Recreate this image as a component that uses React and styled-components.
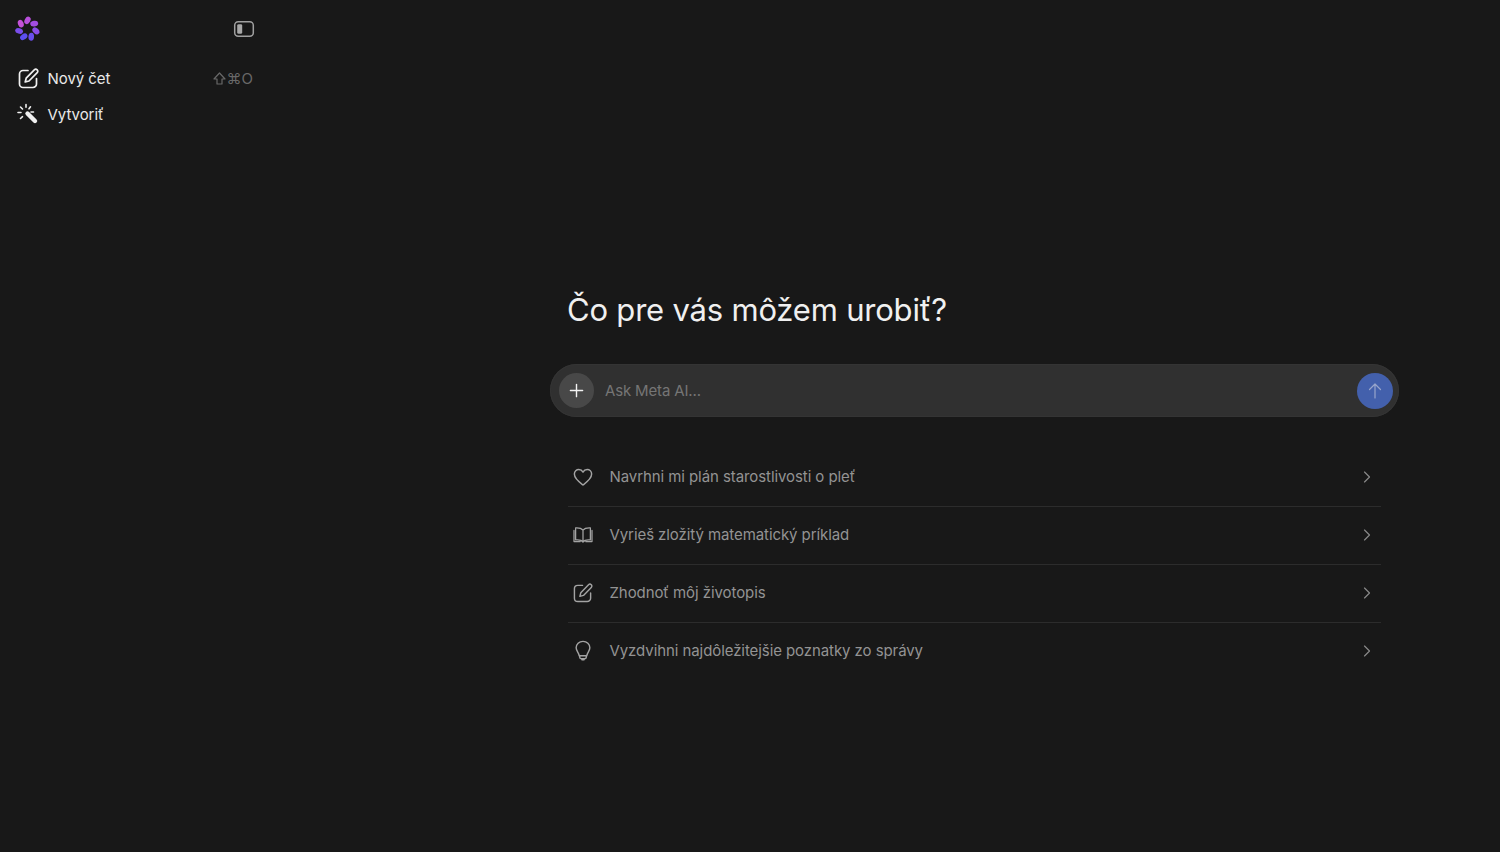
import React from "react";
import styled, { createGlobalStyle } from "styled-components";
import { Plus, ChevronRight } from "lucide-react";

const Global = createGlobalStyle`
  html, body { margin: 0; padding: 0; height: 100%; background: #181818; }
  body { font-family: Inter, "Noto Sans", "Liberation Sans", sans-serif; overflow: hidden; }
  #root { height: 852px; }
`;

const Page = styled.div`
  display: flex;
  height: 852px;
  background: #181818;
`;

const Sidebar = styled.aside`
  width: 270px;
  flex: none;
  padding: 15px 16px 0 15px;
  box-sizing: border-box;
  display: flex;
  flex-direction: column;
`;

const SideTop = styled.div`
  display: flex;
  justify-content: space-between;
  align-items: center;
  height: 27px;
  margin-bottom: 18px;
`;

const ToggleIcon = styled.svg`
  width: 22px;
  height: 18px;
  margin-right: -1px;
`;

const NavRow = styled.div`
  display: flex;
  align-items: center;
  height: 36px;
  padding-left: 1px;
  color: #e9e9e9;
  font-size: 15px;
  letter-spacing: -0.05px;
`;

const NavIcon = styled.span`
  width: 24px;
  height: 24px;
  display: flex;
  align-items: center;
  justify-content: center;
  margin-right: 7.5px;
  color: #f0f0f0;
`;

const Shortcut = styled.span`
  margin-left: auto;
  margin-right: 1px;
  color: #686868;
  display: flex;
  align-items: center;
  gap: 1px;
  font-size: 15px;
`;

const ShiftIcon = styled.svg`
  width: 13px;
  height: 13px;
`;

const Main = styled.main`
  flex: 1;
  padding: 288px 0 0 280px;
  box-sizing: border-box;
`;

const Column = styled.div`
  width: 849px;
`;

const Heading = styled.h1`
  margin: 0 0 32px 17px;
  font-size: 31px;
  line-height: 44px;
  font-weight: 400;
  color: #f0f0f0;
  letter-spacing: -0.2px;
`;

const Composer = styled.div`
  height: 53px;
  border-radius: 27px;
  background: #303030;
  box-shadow: inset 0 0 0 1px #343434;
  display: flex;
  align-items: center;
  padding: 0 6px 0 9px;
`;

const AddButton = styled.div`
  width: 35px;
  height: 35px;
  border-radius: 50%;
  background: #484848;
  color: #f2f2f2;
  display: flex;
  align-items: center;
  justify-content: center;
`;

const Placeholder = styled.div`
  margin-left: 11px;
  padding-bottom: 1px;
  flex: 1;
  color: #757575;
  font-size: 15px;
  letter-spacing: -0.15px;
`;

const SendButton = styled.div`
  width: 36px;
  height: 36px;
  border-radius: 50%;
  background: #4360ac;
  color: #98a5cb;
  display: flex;
  align-items: center;
  justify-content: center;
`;

const Suggestions = styled.div`
  margin: 32px 18px 0 18px;
`;

const Suggestion = styled.div`
  height: 55px;
  padding-bottom: 2px;
  display: flex;
  align-items: center;
  color: #939393;
  font-size: 15px;
  letter-spacing: -0.08px;
  &:not(:last-child) {
    border-bottom: 1px solid #2c2c2c;
  }
`;

const RowIcon = styled.span`
  width: 30px;
  height: 24px;
  margin-right: 11.500px;
  display: flex;
  align-items: center;
  justify-content: center;
  color: #a3a3a3;
`;

const Chevron = styled.span`
  margin-left: auto;
  margin-right: 4px;
  display: flex;
  color: #8a8a8a;
`;

const Logo = () => {
  const petals = [
    { a: 0, c: "#b84fdc" },
    { a: 51.4, c: "#a24de2" },
    { a: 102.8, c: "#8a4de8" },
    { a: 154.2, c: "#6a4eee" },
    { a: 205.7, c: "#5c4ff0" },
    { a: 257.1, c: "#7a4dea" },
    { a: 308.6, c: "#c452d8" },
  ];
  return (
    <svg width="25" height="26" viewBox="-12.500 -13 25 26">
      {petals.map((p) => (
        <ellipse key={p.a} cx="0" cy="-8.600" rx="2.800" ry="4" fill={p.c} transform={`rotate(${p.a}) rotate(30 0 -8.600)`} />
      ))}
    </svg>
  );
};

const PencilSquare = ({ size = 21, weight = 1.7 }) => (
  <svg width={size} height={size} viewBox="0 0 21 21" fill="none" stroke="currentColor" strokeWidth={weight} strokeLinecap="round" strokeLinejoin="round">
    <path d="M10 2.500H5a3.500 3.500 0 0 0-3.500 3.500v10A3.500 3.500 0 0 0 5 19.500h10a3.500 3.500 0 0 0 3.500-3.500v-5.500" />
    <path d="M16.300 1.800a2 2 0 0 1 2.900 2.900L11 13l-3.800 1 1-3.800z" />
  </svg>
);

const Wand = () => (
  <svg width="22" height="22" viewBox="0 0 22 22" fill="none" stroke="currentColor" strokeWidth="1.600" strokeLinecap="round">
    <path d="M10.500 10.500 L18 18" strokeWidth="4.400" />
    <path d="M9 1.500V4.200M3.500 4l2 2M1 9.500h3M3.500 15.500l2-1.800M13.500 3.800l-1.500 2M16.500 9H14" />
  </svg>
);

const HeartIcon = () => (
  <svg width="20" height="20" viewBox="0 0 22 22" fill="none" stroke="currentColor" strokeWidth="1.600" strokeLinejoin="round">
    <path d="M11 19.800C7 16.800 1.500 13 1.500 7.800 1.500 4.800 3.800 2.800 6.400 2.800c2 0 3.600 1 4.600 2.800 1-1.800 2.600-2.800 4.600-2.800 2.600 0 4.900 2 4.900 5 0 5.200-5.500 9-9.500 12z" />
  </svg>
);

const BookIcon = () => (
  <svg width="20" height="18" viewBox="0 0 22 20" fill="none" stroke="currentColor" strokeWidth="1.400" strokeLinejoin="round" strokeLinecap="round">
    <path d="M11 4.500C9.500 2.700 7 2 4 2H2.800v13.500H5c2.700 0 4.800.6 6 2.300 1.200-1.700 3.300-2.300 6-2.300h2.200V2H18c-3 0-5.500.7-7 2.500zM11 4.500v13.300" />
    <path d="M1 5v12.300h7M21 5v12.300h-7" />
  </svg>
);

const BulbIcon = () => (
  <svg width="16" height="21" viewBox="0 0 18 23" fill="none" stroke="currentColor" strokeWidth="1.600" strokeLinecap="round" strokeLinejoin="round">
    <path d="M9 1.200C4.600 1.200 1.300 4.400 1.300 8.500c0 3.500 2.900 5 3.500 9h8.400c.6-4 3.500-5.500 3.500-9 0-4.100-3.300-7.300-7.700-7.300z" />
    <path d="M5.300 17.500v1.700c0 1 .7 1.600 1.600 1.600h4.200c.9 0 1.600-.6 1.600-1.600v-1.700M7.800 22h2.400" />
  </svg>
);

const TallArrow = () => (
  <svg width="14" height="16" viewBox="0 0 14 16" fill="none" stroke="currentColor" strokeWidth="1.200" strokeLinecap="round" strokeLinejoin="round">
    <path d="M7 15V1M1.500 6.500 7 1l5.500 5.500" />
  </svg>
);

const suggestions = [
  { icon: <HeartIcon />, text: "Navrhni mi plán starostlivosti o pleť" },
  { icon: <BookIcon />, text: "Vyrieš zložitý matematický príklad" },
  { icon: <PencilSquare size={20} weight={1.500} />, text: "Zhodnoť môj životopis" },
  { icon: <BulbIcon />, text: "Vyzdvihni najdôležitejšie poznatky zo správy" },
];

export default function App() {
  return (
    <Page>
      <Global />
      <Sidebar>
        <SideTop>
          <Logo />
          <ToggleIcon viewBox="0 0 22 18" fill="none">
            <rect x="1.700" y="1.700" width="18.600" height="14.600" rx="3.500" stroke="#a0a0a0" strokeWidth="1.500" />
            <rect x="4.200" y="4.200" width="5" height="9.600" rx="1.400" fill="#a8a8a8" />
          </ToggleIcon>
        </SideTop>
        <NavRow>
          <NavIcon><PencilSquare /></NavIcon>
          Nový čet
          <Shortcut>
            <ShiftIcon viewBox="0 0 13 13" fill="none" stroke="currentColor" strokeWidth="1.200" strokeLinejoin="round">
              <path d="M6.500 1 12 7H9v5H4V7H1z" />
            </ShiftIcon>
            ⌘O
          </Shortcut>
        </NavRow>
        <NavRow>
          <NavIcon><Wand /></NavIcon>
          Vytvoriť
        </NavRow>
      </Sidebar>
      <Main>
        <Column>
          <Heading>Čo pre vás môžem urobiť?</Heading>
          <Composer>
            <AddButton><Plus size={21} strokeWidth={1.6} /></AddButton>
            <Placeholder>Ask Meta AI...</Placeholder>
            <SendButton><TallArrow /></SendButton>
          </Composer>
          <Suggestions>
            {suggestions.map((s) => (
              <Suggestion key={s.text}>
                <RowIcon>{s.icon}</RowIcon>
                {s.text}
                <Chevron><ChevronRight size={20} strokeWidth={1.4} /></Chevron>
              </Suggestion>
            ))}
          </Suggestions>
        </Column>
      </Main>
    </Page>
  );
}
